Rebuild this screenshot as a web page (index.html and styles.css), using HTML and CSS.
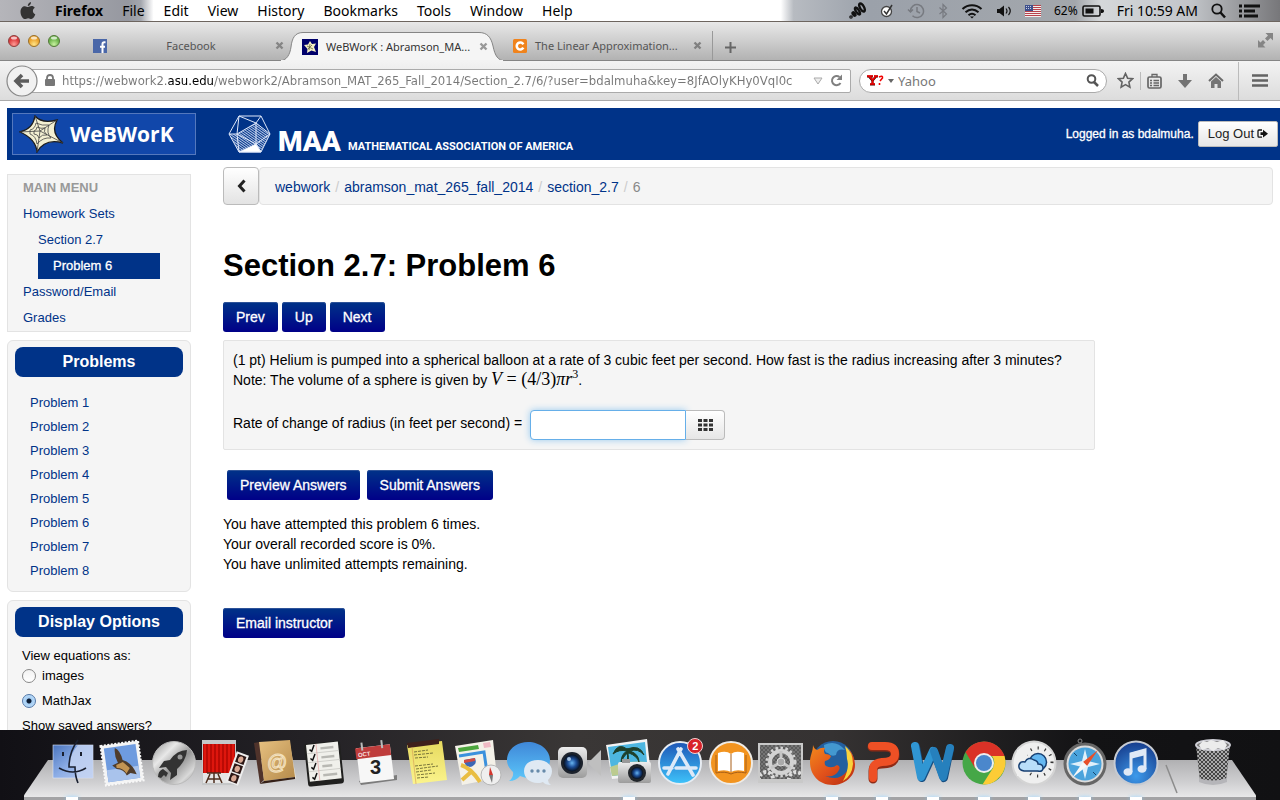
FILE: index.html
```html
<!DOCTYPE html>
<html lang="en">
	<head>
		<title>WeBWorK : Abramson_MAT_265_Fall_2014 : Section_2.7 : 6</title>
		<meta charset="utf-8">
		<meta name="viewport" content="width=device-width, initial-scale=1.0">
		<link rel="stylesheet" href="styles.css">
	</head>
	<body>
		<svg class="defs" aria-hidden="true">
			<defs>
				<linearGradient id="blue" x1="0" y1="0" x2="0" y2="1"><stop offset="0" stop-color="#1d55b5"/><stop offset="1" stop-color="#3fc4fb"/></linearGradient>
				<linearGradient id="bubble" x1="0" y1="0" x2="0" y2="1"><stop offset="0" stop-color="#3f87d8"/><stop offset="1" stop-color="#5cc8fb"/></linearGradient>
				<linearGradient id="finder" x1="0" y1="0" x2="1" y2="1"><stop offset="0" stop-color="#4a74bd"/><stop offset=".5" stop-color="#8cade6"/><stop offset="1" stop-color="#b9c9ee"/></linearGradient>
				<linearGradient id="metal" x1="0" y1="0" x2="1" y2="1"><stop offset="0" stop-color="#8d8d8d"/><stop offset=".3" stop-color="#e8e8e8"/><stop offset=".55" stop-color="#949494"/><stop offset=".8" stop-color="#d9d9d9"/><stop offset="1" stop-color="#858585"/></linearGradient>
				<linearGradient id="curtain" x1="0" y1="0" x2="4" y2="0" gradientUnits="userSpaceOnUse" spreadMethod="repeat"><stop offset="0" stop-color="#a80500"/><stop offset=".5" stop-color="#f01c12"/><stop offset="1" stop-color="#a80500"/></linearGradient>
				<linearGradient id="tan" x1="0" y1="0" x2="1" y2="1"><stop offset="0" stop-color="#e6c080"/><stop offset="1" stop-color="#b58a4a"/></linearGradient>
				<linearGradient id="silver" x1="0" y1="0" x2="0" y2="1"><stop offset="0" stop-color="#ededed"/><stop offset="1" stop-color="#9c9c9c"/></linearGradient>
				<linearGradient id="yellow" x1="0" y1="0" x2="0" y2="1"><stop offset="0" stop-color="#e6d95e"/><stop offset="1" stop-color="#fbf48d"/></linearGradient>
				<linearGradient id="fox" x1="0" y1="0" x2="1" y2="1"><stop offset="0" stop-color="#f28a1c"/><stop offset=".5" stop-color="#e2521b"/><stop offset="1" stop-color="#b52a10"/></linearGradient>
				<radialGradient id="lens"><stop offset="0" stop-color="#68b4f0"/><stop offset=".5" stop-color="#1c4d96"/><stop offset="1" stop-color="#07101f"/></radialGradient>
				<radialGradient id="itunes" cx=".5" cy=".8" r=".8"><stop offset="0" stop-color="#3d9aeb"/><stop offset="1" stop-color="#163c8c"/></radialGradient>
				<radialGradient id="redlight" cx=".5" cy=".8"><stop offset="0" stop-color="#ff9c96"/><stop offset="1" stop-color="#dc3a3c"/></radialGradient>
				<radialGradient id="amberlight" cx=".5" cy=".8"><stop offset="0" stop-color="#ffe588"/><stop offset="1" stop-color="#eca32c"/></radialGradient>
				<radialGradient id="greenlight" cx=".5" cy=".8"><stop offset="0" stop-color="#c8f2a0"/><stop offset="1" stop-color="#6cb44b"/></radialGradient>
				<pattern id="mesh" width="4" height="4" patternUnits="userSpaceOnUse"><path d="M0 0L4 4M4 0L0 4" stroke="#c4c4c4" stroke-width=".8"/></pattern>
				<pattern id="hatch" width="2" height="2" patternUnits="userSpaceOnUse" patternTransform="rotate(35)"><path d="M0 .5H2" stroke="#c9d7f2" stroke-width=".9"/></pattern>
				<clipPath id="gears"><path d="M4 7h41v34H4z"/></clipPath>
			</defs>
		</svg>

		<nav class="menubar">
			<button class="apple" aria-label="Apple"><svg width="16" height="18" viewBox="0 0 16 18"><path fill="#333" d="M11 0c.2 2-1.400 4-3.200 4C7.500 2.200 9.200.3 11 0zM8 5c1 0 2-1 3.600-1 1.300 0 2.500.7 3.200 1.700-2.800 1.700-2.300 5.500.5 6.600C14.600 14.500 13 17 11.400 17c-1.200 0-1.700-.8-3.200-.8-1.500 0-2 .8-3.200.8C2.800 17 .5 13.300.5 9.700.5 6.200 2.700 4.200 4.900 4.200 6.300 4.200 7.200 5 8 5z"/></svg></button>
			<button class="app">Firefox</button>
			<button>File</button>
			<button>Edit</button>
			<button>View</button>
			<button>History</button>
			<button>Bookmarks</button>
			<button>Tools</button>
			<button>Window</button>
			<button>Help</button>
			<div class="status">
				<svg width="18" height="18" viewBox="0 0 18 18" fill="none" stroke="#111" stroke-width="2.400"><ellipse cx="13" cy="5.500" rx="2" ry="4.500" transform="rotate(-30 13 5.500)"/><ellipse cx="8.500" cy="9" rx="1.500" ry="4" transform="rotate(-35 8.500 9)"/><ellipse cx="5" cy="12" rx="1" ry="2" transform="rotate(-35 5 12)"/><circle cx="2" cy="15" r=".6"/></svg>
				<svg width="14" height="16" viewBox="0 0 14 16"><circle cx="6.500" cy="8.500" r="5" fill="#fff" stroke="#444" stroke-width="1.300"/><path d="M4 8l2.500 3L12 2" fill="none" stroke="#333" stroke-width="1.500"/></svg>
				<svg width="18" height="16" viewBox="0 0 18 16" fill="none" stroke="#777a80" stroke-width="1.500"><path d="M3.500 8a6.500 6.500 0 1 1 2 4.800M1 6.500l2.500 2.500L6 6.500M10 4v4.500l3 1.500"/></svg>
				<svg width="10" height="16" viewBox="0 0 10 16" fill="none" stroke="#777a80" stroke-width="1.200"><path d="M1.500 4.500l7 6.500L5 14.500v-13L8.500 5l-7 6"/></svg>
				<svg width="22" height="16" viewBox="0 0 22 16" fill="none" stroke="#111" stroke-width="2"><path d="M1.500 6c5.500-5 13.500-5 19 0M4.500 9.300c4-3.600 9-3.600 13 0M7.500 12.300c2.300-2 4.700-2 7 0"/><path d="M9 13.500h4l-2 2z" fill="#111" stroke="none"/></svg>
				<svg width="16" height="14" viewBox="0 0 16 14"><path d="M1 5h2.500L8 1.500v11L3.500 9H1z" fill="#111"/><path d="M10 4.500q2 2.500 0 5M12.500 3q3.500 4 0 8" fill="none" stroke="#111" stroke-width="1.200"/></svg>
				<svg class="flag" width="16" height="12" viewBox="0 0 16 12"><path fill="#f4eeee" d="M0 0h16v12H0z"/><path stroke="#b8434c" d="M0 .5h16M0 2.500h16M0 4.500h16M0 6.500h16M0 8.500h16M0 10.500h16"/><path fill="#3d4f8c" d="M0 0h8v6H0z"/><path d="M1 1.500h6M1 3.500h6" stroke="#c5cbe0" stroke-dasharray="1 1"/></svg>
				<span class="percent">62%</span>
				<svg class="battery" width="22" height="12" viewBox="0 0 22 12"><rect x="1" y="1" width="17" height="10" rx="1.500" fill="none" stroke="#111" stroke-width="1.600"/><path fill="#111" d="M3.500 3.500h8v5h-8zM19 4q3 0 3 2t-3 2z"/></svg>
				<span class="clock">Fri 10:59 AM</span>
				<svg class="search" width="15" height="16" viewBox="0 0 15 16" fill="none" stroke="#111" stroke-width="1.800"><circle cx="6" cy="6" r="4.700"/><path d="M9.500 9.500L14 14.500" stroke-width="2.500"/></svg>
				<svg class="list" width="21" height="14" viewBox="0 0 21 14" stroke="#111" stroke-width="3"><path d="M0 2h3M5 2h16M0 7h3M5 7h11M0 12h3M5 12h14"/></svg>
			</div>
		</nav>

		<header class="browser">
			<div class="tabs">
				<div class="lights">
					<button aria-label="Close"><svg width="14" height="14"><circle cx="7" cy="7" r="5.500" fill="url(#redlight)" stroke="#8d4240"/><ellipse cx="7" cy="4" rx="3" ry="1.500" fill="#fff" opacity=".7"/></svg></button>
					<button aria-label="Minimize"><svg width="14" height="14"><circle cx="7" cy="7" r="5.500" fill="url(#amberlight)" stroke="#97702c"/><ellipse cx="7" cy="4" rx="3" ry="1.500" fill="#fff" opacity=".7"/></svg></button>
					<button aria-label="Zoom"><svg width="14" height="14"><circle cx="7" cy="7" r="5.500" fill="url(#greenlight)" stroke="#55783c"/><ellipse cx="7" cy="4" rx="3" ry="1.500" fill="#fff" opacity=".7"/></svg></button>
				</div>
				<div class="tab facebook">
					<svg width="14" height="14" viewBox="0 0 14 14"><path fill="#4a67a8" d="M0 0h14v14H0z"/><path d="M12.500 3.300h-1.300q-1.700 0-1.700 1.700v9M7 7.700h5" fill="none" stroke="#fff" stroke-width="2"/></svg>
					<span>Facebook</span>
					<button aria-label="Close tab"><svg width="9" height="9" viewBox="0 0 9 9"><path d="M1.500 1.500l6 6M7.500 1.500l-6 6" stroke="#858585" stroke-width="2.400"/></svg></button>
				</div>
				<div class="tab active">
					<svg class="shape" viewBox="0 0 226 29" preserveAspectRatio="none"><path d="M0 29C8 29 11 22 12 15C13 6 16 .5 24 .5H200C208 .5 212 5 214 14C216 24 219 28.500 226 29Z" fill="#f5f5f5" stroke="#858585"/><path d="M2 29H224" stroke="#f3f3f3" stroke-width="2"/></svg>
					<svg width="16" height="16" viewBox="0 0 16 16"><path fill="#00006b" d="M0 0h16v16H0z"/><path d="M2 6l4-.5L8 2l2 3 4-.5-2 3.500 2 5-4.500-1.500L5 14l.5-4z" fill="#f4efc4"/><path d="M5 7l6 3M8 5l-1 6M10 6l-4 4" stroke="#55542c" stroke-width=".7"/></svg>
					<span>WeBWorK : Abramson_MA...</span>
					<button aria-label="Close tab"><svg width="9" height="9" viewBox="0 0 9 9"><path d="M1.500 1.500l6 6M7.500 1.500l-6 6" stroke="#999" stroke-width="2.400"/></svg></button>
				</div>
				<div class="tab linear">
					<svg width="14" height="14" viewBox="0 0 14 14"><rect width="14" height="14" rx="1.500" fill="#f0831c"/><path d="M10.300 5.300A3.500 3.500 0 1 0 10.300 8.700" fill="none" stroke="#fff" stroke-width="2.600"/></svg>
					<span>The Linear Approximation...</span>
					<button aria-label="Close tab"><svg width="9" height="9" viewBox="0 0 9 9"><path d="M1.500 1.500l6 6M7.500 1.500l-6 6" stroke="#808080" stroke-width="2.400"/></svg></button>
				</div>
				<button class="newtab" aria-label="New tab"><svg width="11" height="11" viewBox="0 0 11 11"><path d="M5.500 0v11M0 5.500h11" stroke="#666" stroke-width="2"/></svg></button>
				<button class="fullscreen" aria-label="Full screen"><svg width="15" height="15" viewBox="0 0 15 15" fill="#858585"><path d="M7.500 0H15v7.500L12.500 5 9.500 8 7 5.500l3-3zM0 7l2.500 2.500L5 7l2.500 2.500L5 12l2.500 2.500H0z"/></svg></button>
			</div>
			<div class="toolbar">
				<button class="goback" aria-label="Back"><svg width="32" height="32" viewBox="0 0 32 32"><circle cx="16" cy="16" r="15" fill="#f1f1f1" stroke="#888" stroke-width="1.200"/><path d="M16 10l-6 6 6 6M11 16h12" fill="none" stroke="#5c5c5c" stroke-width="3.600"/></svg></button>
				<div class="address">
					<svg width="10" height="13" viewBox="0 0 10 13"><rect y="5" width="10" height="7" rx="1" fill="#777"/><path d="M2 6V4q0-3 3-3t3 3v2" fill="none" stroke="#777" stroke-width="1.800"/></svg>
					<input class="url" type="text" aria-label="Address" value="https://webwork2.asu.edu/webwork2/Abramson_MAT_265_Fall_2014/Section_2.7/6/?user=bdalmuha&amp;key=8JfAOlyKHy0VqI0c">
					<svg width="10" height="8" viewBox="0 0 10 8"><path d="M1 1h8L5 7z" fill="#eee" stroke="#aaa"/></svg>
					<button aria-label="Reload"><svg width="13" height="13" viewBox="0 0 13 13"><path d="M10.500 9A4.600 4.600 0 1 1 9.500 3" fill="none" stroke="#808080" stroke-width="2"/><path d="M12 .5V6H6.500z" fill="#808080"/></svg></button>
				</div>
				<div class="find">
					<svg width="17" height="11" viewBox="0 0 17 11"><path d="M0 1.500h6M7 1.500h4M2 1.500l3.500 4L9 1.500M5.500 5v4M3 9.500h5" stroke="#400" stroke-width="2.200" fill="none"/><path d="M0 1h6M7 1h4M2 1l3.500 4L9 1M5.500 5v4M3 9h5M12 2q4-2 3.500 1L13 6M12.500 8v2" stroke="#f00000" stroke-width="1.600" fill="none"/></svg>
					<svg width="6" height="4"><path d="M0 0h6L3 4z" fill="#666"/></svg>
					<input type="text" aria-label="Search" placeholder="Yahoo">
					<svg width="13" height="13" viewBox="0 0 13 13" fill="none" stroke="#555"><circle cx="5.500" cy="5" r="3.800" stroke-width="2"/><path d="M8 8l4 4" stroke-width="2.500"/></svg>
				</div>
				<div class="tools">
					<button aria-label="Bookmark"><svg width="17" height="17" viewBox="0 0 17 17"><path d="M8.500 1.500l2.100 4.700 5 .5-3.700 3.400 1 5-4.400-2.500-4.400 2.500 1-5L1.400 6.700l5-.5z" fill="none" stroke="#636363" stroke-width="1.600"/></svg></button>
					<i class="rule"></i>
					<button aria-label="Show bookmarks"><svg width="15" height="16" viewBox="0 0 15 16" fill="none" stroke="#666" stroke-width="1.700"><rect x="1" y="4" width="13" height="11" rx="1.500"/><path d="M5 4V1.500h5V4M3 7.500h2M6.500 7.500H12M3 10h2M6.500 10H12M3 12.500h2M6.500 12.500H12" stroke-width="1.300"/></svg></button>
					<button class="down" aria-label="Downloads"><svg width="14" height="14" viewBox="0 0 14 14"><path d="M5 0h4v6h5l-7 8-7-8h5z" fill="#737373"/></svg></button>
					<button class="home" aria-label="Home"><svg width="16" height="15" viewBox="0 0 16 15"><path d="M1 8l7-6.500L15 8" fill="none" stroke="#6a6a6a" stroke-width="2"/><path d="M3 8.500l5-4.500 5 4.500V15H9.500v-4h-3v4H3z" fill="#757575"/></svg></button>
					<i class="rule tall"></i>
					<button class="menu" aria-label="Open menu"><svg width="16" height="13" viewBox="0 0 16 13"><path d="M0 1.500h16M0 6.500h16M0 11.500h16" stroke="#636363" stroke-width="2.600"/></svg></button>
				</div>
			</div>
		</header>

		<div class="page">
			<div class="masthead">
				<a class="webwork" href="#">
					<svg width="46" height="38" viewBox="0 0 46 38"><path d="M1 17Q14 14 16 1q7 8 22 4-7 13 6 23-18-5-26 9-1-13-17-20z" fill="#f3f0d2" stroke="#1d1d1d" stroke-width="1.300"/><path d="M1 17l20-1M16 1l5 15M38 5L21 16l-3 21M21 16l23 12M11 15q5-1 6-7 6 3 13 2-3 8 2 13-8-1-14 6-1-8-7-10zM15 16q3-1 3-4 4 2 8 1-2 4 2 7-5-1-8 3-1-4-5-4z" fill="none" stroke="#444" stroke-width=".8"/></svg>
					<span>WeBWorK</span>
				</a>
				<a class="maa" href="#">
					<svg width="43" height="39" viewBox="0 0 43 39" stroke="#dfe8fa" stroke-width="1"><path d="M9 19L28 8l14 11-9 18H11L1 19z" fill="url(#hatch)" stroke="none"/><path d="M11 1h22l9 18-9 18H11L1 19zM11 1l17 7L33 1M28 8l14 11L28 29 9 19 28 8v21M11 1L9 19l2 18M1 19h8M33 37l-5-8" fill="none"/><path d="M11 37l17-8 5 8z" fill="#fff"/></svg>
					<b>MAA</b>
					<span>MATHEMATICAL ASSOCIATION OF AMERICA</span>
				</a>
				<div class="login">
					<span>Logged in as bdalmuha.</span>
					<button>Log Out <svg width="11" height="10" viewBox="0 0 11 10"><path d="M5 1H2Q1 1 1 2v5q0 1.200 1 1.200h3" fill="none" stroke="#111" stroke-width="1.300"/><path d="M3.500 3.300H6V.8l5 3.900-5 3.900V6H3.500z" fill="#111"/></svg></button>
				</div>
			</div>

			<div class="columns">
				<aside>
					<ul class="mainmenu">
						<li class="heading">Main Menu</li>
						<li><a href="#">Homework Sets</a></li>
						<li class="nested"><a href="#">Section 2.7</a></li>
						<li class="nested"><a class="current" href="#">Problem 6</a></li>
						<li><a href="#">Password/Email</a></li>
						<li><a href="#">Grades</a></li>
					</ul>
					<section class="panel">
						<h2>Problems</h2>
						<ul class="problems">
							<li><a href="#">Problem 1</a></li>
							<li><a href="#">Problem 2</a></li>
							<li><a href="#">Problem 3</a></li>
							<li><a href="#">Problem 4</a></li>
							<li><a href="#">Problem 5</a></li>
							<li><a href="#">Problem 6</a></li>
							<li><a href="#">Problem 7</a></li>
							<li><a href="#">Problem 8</a></li>
						</ul>
					</section>
					<section class="panel">
						<h2>Display Options</h2>
						<div class="options">
							<p>View equations as:</p>
							<label><input type="radio" name="display"> images</label>
							<label><input type="radio" name="display" checked> MathJax</label>
							<p>Show saved answers?</p>
						</div>
					</section>
				</aside>

				<main>
					<div class="crumbs">
						<button aria-label="Up one level"><svg width="9" height="14" viewBox="0 0 9 14"><path d="M7.500 1.500L2.500 7l5 5.500" fill="none" stroke="#222" stroke-width="3"/></svg></button>
						<ol>
							<li><a href="#">webwork</a></li>
							<li><a href="#">abramson_mat_265_fall_2014</a></li>
							<li><a href="#">section_2.7</a></li>
							<li>6</li>
						</ol>
					</div>
					<h1>Section 2.7: Problem 6</h1>
					<div class="nav">
						<a class="btn" href="#">Prev</a>
						<a class="btn" href="#">Up</a>
						<a class="btn" href="#">Next</a>
					</div>
					<div class="problem">
						<p>(1 pt) Helium is pumped into a spherical balloon at a rate of 3 cubic feet per second. How fast is the radius increasing after 3 minutes?</p>
						<p>Note: The volume of a sphere is given by <span class="math"><i>V</i> = (4/3)<i>πr</i><sup>3</sup></span>.</p>
						<div class="answer">
							<label for="answer">Rate of change of radius (in feet per second) =</label>
							<div class="entry">
								<input id="answer" type="text">
								<button aria-label="Equation editor"><svg width="15" height="12" viewBox="0 0 15 12" stroke="#333" stroke-width="3"><path d="M0 1.500h4M5.500 1.500h4M11 1.500h4M0 6h4M5.500 6h4M11 6h4M0 10.500h4M5.500 10.500h4M11 10.500h4"/></svg></button>
							</div>
						</div>
					</div>
					<div class="submit">
						<button class="btn">Preview Answers</button>
						<button class="btn">Submit Answers</button>
					</div>
					<p>You have attempted this problem 6 times.<br>
					Your overall recorded score is 0%.<br>
					You have unlimited attempts remaining.</p>
					<button class="btn email">Email instructor</button>
				</main>
			</div>
		</div>

		<footer class="dock">
			<div class="apps">
				<button class="running" aria-label="Finder"><svg viewBox="0 0 50 50"><rect x="6" y="7" width="40" height="33" fill="url(#finder)" stroke="#dfe7f7" stroke-width=".6"/><path d="M31 7h15v33H30q-2-6-2-11h-6q1-13 9-22z" fill="#c6d5f3" opacity=".8"/><path d="M31 2Q22 14 22 29h6q0 9 3 16M12 30q14 8 27 0" fill="none" stroke="#1a2030" stroke-width="1.600"/><path d="M16 14v4M34 14v4" stroke="#1a2030" stroke-width="2"/></svg></button>
				<button aria-label="Mail"><svg viewBox="0 0 50 50"><g transform="rotate(-8 25 25)"><rect x="5" y="5" width="38" height="40" fill="#f4f4f4" stroke="#f8f8f8" stroke-width="2" stroke-dasharray="2 1.500"/><rect x="8" y="8" width="32" height="34" fill="#6e9bdf"/><path d="M8 30h32v12H8z" fill="#a9c3ec"/><path d="M19 9q5 3 6 13 9 4 12 16l-6-2-4 2q-2-7-9-8l-4-4 6-2q-3-8-1-15z" fill="#4f3c2b"/><path d="M18 26l7-2 6 7-4 5q-2-6-9-7z" fill="#c29453"/></g></svg></button>
				<button aria-label="Launchpad"><svg viewBox="0 0 50 50"><circle cx="25" cy="25" r="21.500" fill="url(#metal)" stroke="#bbb"/><path d="M38 12q-10 0-17 10l-6 1-5 7 7-1 5 6-1 7 7-5v-6q9-8 10-19zM14 31q-5 2-5 8l3 1 3-3 2 2 2-4z" fill="#333"/><circle cx="31" cy="19" r="2.500" fill="#999"/></svg></button>
				<button aria-label="Photo Booth"><svg viewBox="0 0 50 50"><path d="M3 2h34v45H3z" fill="#c5c7c8"/><path d="M4 6h32v29H4z" fill="url(#curtain)"/><path d="M4 35h32v10H4z" fill="#e6e6e6"/><path d="M8 35h14M11 36L7 45M19 36l4 9M15 35v10M9 41h12" stroke="#4e2d1c" stroke-width="1.500"/><g transform="rotate(20 37 30)"><path d="M32 14h13v32H32z" fill="#eee"/><path d="M34 16h9v8.500h-9zM34 26h9v8.500h-9zM34 36h9v8.500h-9z" fill="#2c1715"/><g fill="#d9a995"><ellipse cx="38.500" cy="20.500" rx="2.600" ry="3.200"/><ellipse cx="38.500" cy="30.500" rx="2.600" ry="3.200"/><ellipse cx="38.500" cy="40.500" rx="2.600" ry="3.200"/></g></g></svg></button>
				<button aria-label="Contacts"><svg viewBox="0 0 50 50"><path d="M40 7l6 33-33 5z" fill="#e8e4da"/><path d="M4 5l5-1 5 38-4 4z" fill="#4f332b"/><path d="M9 4l31-2 5 37-31 4z" fill="url(#tan)"/><path d="M10 46l4-3 31-4v2z" fill="#342018"/><text x="17" y="31" class="at">@</text></svg></button>
				<button aria-label="Reminders"><svg viewBox="0 0 50 50"><g transform="rotate(-6 25 25)"><rect x="6" y="4" width="36" height="43" rx="3" fill="#20201f"/><rect x="8" y="5" width="32" height="37" fill="#f0f0eb"/><path d="M8 14h32M8 23h32M8 32h32" stroke="#c9c9c4" stroke-width=".8"/><path d="M18 5v37" stroke="#e39a9a" stroke-width=".6"/><path d="M11 10l2 2 3-6M11 19l2 2 3-6M11 28l2 2 3-6M11 38l2 2 3-6" fill="none" stroke="#111" stroke-width="1.500"/><path d="M22 10h13M22 19h13M22 28h10M22 37h14" stroke="#b8b8b3" stroke-width="2.400"/></g></svg></button>
				<button aria-label="Calendar"><svg viewBox="0 0 50 50"><path d="M8 43l38-6v5L10 47z" fill="#7c7c7c"/><g transform="rotate(-7 25 25)"><path d="M7 8h34v35H7z" fill="#f7f7f7"/><path d="M6 8h35v11H6z" fill="#bf3d3c"/><path d="M13 3v8M33 3v8" stroke="#bbb" stroke-width="2"/><text x="8" y="17" class="month">OCT</text></g><text x="19" y="36" class="day">3</text></svg></button>
				<button aria-label="Stickies"><svg viewBox="0 0 50 50"><path d="M5 7l35-4 5 39-34 4z" fill="url(#yellow)"/><path d="M5 5l32-4v5L6 10z" fill="#3f201b"/><path d="M12 14l14-2M12 17l19-2M13 20l13-1M13 28l18-2M14 31l22-3M14 34l15-2M15 37l18-2M15 40l12-1" stroke="#6d6a34" stroke-width=".9" stroke-dasharray="3 1"/><path d="M10 9l4 37" stroke="#d59a55" stroke-width=".6"/></svg></button>
				<button aria-label="Maps"><svg viewBox="0 0 50 50"><path d="M3 8l38-6 4 38-35 7z" fill="#f4f1e8"/><path d="M6 10l20-3 1 4-20 3z" fill="#4ca63d"/><path d="M31 5l7-1 1 5-7 1z" fill="#efb9c3"/><path d="M7 18l25-4 4 27" fill="none" stroke="#3b91dd" stroke-width="3"/><path d="M9 27q10 3 19 17M10 42l9-8" fill="none" stroke="#e9bd42" stroke-width="4"/><path d="M12 22l11-2q2 5-1 7-2 2-4 2-4-1-5-3z" fill="#3c67b5"/><path d="M12 22l11-2v3l-11 2z" fill="#cf4b43"/><circle cx="39" cy="37" r="10" fill="#efefef" stroke="#b7b7b7"/><path d="M38 29l3 8h-4z" fill="#d3352c"/><path d="M37 37h4l-1 8z" fill="#777"/></svg></button>
				<button aria-label="Messages"><svg viewBox="0 0 50 50"><path d="M25 4c12 0 22 8 22 18s-9 18-20 18c-4 0-7-1-10-2q-4 5-11 5 5-4 4-9C6 30 4 27 4 22 4 12 13 4 25 4z" fill="url(#bubble)"/><path d="M35 22c8 0 14 5 14 11 0 4-2 7-4 9q0 3 3 5-6 0-8-3c-2 1-4 1-6 1-7 0-13-5-13-12s6-11 14-11z" fill="#dfe9f3"/><g fill="#668aaa"><circle cx="29" cy="33" r="1.700"/><circle cx="35" cy="33" r="1.700"/><circle cx="41" cy="33" r="1.700"/></g></svg></button>
				<button aria-label="FaceTime"><svg viewBox="0 0 50 50"><path d="M34 25l13-13v26z" fill="#bfbfbf"/><rect x="4" y="9" width="29" height="31" rx="5" fill="url(#silver)"/><circle cx="18" cy="25" r="11" fill="#1c222c"/><circle cx="18" cy="25" r="8.500" fill="url(#lens)"/><circle cx="15" cy="21" r="2" fill="#c8e3fb" opacity=".8"/></svg></button>
				<button class="running" aria-label="iPhoto"><svg viewBox="0 0 50 50"><path d="M2 7l41-6 4 36-39 4z" fill="#f3f3f3"/><path d="M4 9l37-5 3 30-36 4z" fill="#4db6e0"/><path d="M6 29q17-7 37-5l1 10-36 4z" fill="#bccb8f"/><path d="M23 28q3-8 0-18M23 11q-9-7-14 5 6-5 14-3-6 3-6 12 3-9 8-10 8 3 10 9 0-8-9-11 8-3 14 4-4-11-17-6z" fill="#1d3f2b" stroke="#1d3f2b"/><rect x="14" y="24" width="33" height="21" rx="2" fill="url(#silver)"/><path d="M18 21h8v4h-8z" fill="#999"/><circle cx="33" cy="35" r="9" fill="#22262b"/><circle cx="33" cy="35" r="6" fill="url(#lens)"/></svg></button>
				<button aria-label="App Store"><svg viewBox="0 0 50 50"><circle cx="25" cy="25" r="21" fill="url(#blue)" stroke="#e7ecf2" stroke-width="2"/><path d="M26 11L13 36M23 11l15 26M9 30h8M21 30h12M35 30h6" stroke="#dce9f8" stroke-width="3.600" stroke-linecap="round"/></svg><b class="badge">2</b></button>
				<button aria-label="iBooks"><svg viewBox="0 0 50 50"><circle cx="25" cy="25" r="21" fill="#f29420" stroke="#efebe5" stroke-width="2"/><path d="M12 15q8-3 13 1 5-4 13-1v18q-8-2-13 1-5-3-13-1z" fill="#fff"/><path d="M10 17v18q9-2 15 1 6-3 15-1V17M25 16v18" fill="none" stroke="#a95f16" stroke-width="1"/></svg></button>
				<button aria-label="System Preferences"><svg viewBox="0 0 50 50"><rect x="2" y="5" width="45" height="40" fill="#c9c9c9"/><path d="M4 7h41v34H4z" fill="#5c5c5c"/><path d="M4 7h41v34H4z" fill="url(#mesh)" opacity=".3"/><g clip-path="url(#gears)"><circle cx="25" cy="24" r="11" fill="none" stroke="#d3d3d3" stroke-width="4"/><circle cx="25" cy="24" r="14" fill="none" stroke="#d3d3d3" stroke-width="3" stroke-dasharray="2.500 2.500"/><path d="M25 24V13M25 24l10 6M25 24l-10 6" stroke="#c6c6c6" stroke-width="3"/><circle cx="25" cy="24" r="4" fill="#aaa" stroke="#ddd"/><circle cx="10" cy="41" r="7" fill="none" stroke="#ddd" stroke-width="4" stroke-dasharray="3 2"/><circle cx="40" cy="41" r="7" fill="none" stroke="#ddd" stroke-width="4" stroke-dasharray="3 2"/></g></svg></button>
				<button class="running" aria-label="Firefox"><svg viewBox="0 0 50 50"><circle cx="26" cy="24" r="21" fill="#235f9f"/><path d="M17 7q12-6 21 5-8-2-9 5-5 2-8-2-4 0-4-8z" fill="#4398d0"/><path d="M6 7q1 4 4 5 4-3 8-2-2 3 0 6 4 0 6 2-1 4-6 5-1 3 1 5 6 3 11-1 4 1 2 5-4 8-14 6 14 6 22-5 6-9 2-22 6 8 6 16c0 12-11 20-22 20C11 47 3 36 3 24 3 17 6 14 6 7z" fill="url(#fox)"/><path d="M38 8q8 6 8 18-1 12-10 17 7-13 4-22 0-7-2-13z" fill="#f9d23c"/></svg></button>
				<button class="running" aria-label="PowerPoint"><svg viewBox="0 0 50 50" fill="none" stroke-linecap="round" stroke-linejoin="round"><path d="M15 9h13q10 0 10 8 0 9-13 9-9 0-9 7v8" stroke="#8f2a15" stroke-width="9"/><path d="M15 8h13q10 0 10 8 0 8-13 8-9 1-9 8v8" stroke="#ee5025" stroke-width="8"/></svg></button>
				<button class="running" aria-label="Word"><svg viewBox="0 0 50 50" fill="none" stroke-linecap="round" stroke-linejoin="round" stroke-width="8"><path d="M8 9l6 31 12-26 10 26 6-29" stroke="#164f83"/><path d="M7 8l6 31 12-26" stroke="#3096d3"/><path d="M26 13l9 26 7-29" stroke="#2680bd"/></svg></button>
				<button class="running" aria-label="Chrome"><svg viewBox="0 0 50 50"><circle cx="25" cy="25" r="21.500" fill="#45a747"/><path d="M25 3.500A21.500 21.500 0 0 1 45.500 18H25L16 30 6.500 14Q13 3.500 25 3.500z" fill="#da3227"/><path d="M45.500 18q4 14-8 24-6 5-14 4.500L34 30q3-7-1-12z" fill="#fccc36"/><circle cx="25" cy="25" r="10" fill="#eee"/><circle cx="25" cy="25" r="8" fill="#4b87cc"/></svg></button>
				<button class="running" aria-label="Weather"><svg viewBox="0 0 50 50"><circle cx="25" cy="25" r="21.500" fill="#efefef" stroke="#d4d4d4" stroke-width="2"/><circle cx="29" cy="24" r="14" fill="none" stroke="#333" stroke-width="3" stroke-dasharray="1.200 6.100" stroke-dashoffset="-51" pathLength="88"/><path d="M8 12h10v26H8z" fill="#efefef"/><circle cx="29" cy="24" r="8.500" fill="#65b8f2" stroke="#173f72" stroke-width="1.500"/><path d="M15 33q-6-1-5-6 1-4 6-3 3-6 9-2 4 1 4 4 5 0 5 4t-5 3z" fill="#b9def9" stroke="#173f72" stroke-width="1.500"/></svg></button>
				<button class="running" aria-label="Safari"><svg viewBox="0 0 50 50"><circle cx="20" cy="3" r="2" fill="none" stroke="#888"/><circle cx="25" cy="26" r="20" fill="#dcdcdc" stroke="#666" stroke-width="3"/><circle cx="25" cy="26" r="16.500" fill="#4aa3dc"/><path d="M25 11l3 12 12 3-12 3-3 12-3-12-12-3 12-3z" fill="#dff0fb"/><path d="M38 12L27 28l-4-4z" fill="#e8502a"/><path d="M12 40l11-16 4 4z" fill="#f7f7f7"/><path d="M14 15l3 3M36 37l-3-3" stroke="#16476d"/></svg></button>
				<button class="running" aria-label="iTunes"><svg viewBox="0 0 50 50"><circle cx="25" cy="25" r="21.500" fill="url(#itunes)" stroke="#c7cbd2" stroke-width="2"/><path d="M20 34V16l14-4v19" fill="none" stroke="#dfe9f6" stroke-width="3"/><path d="M19 15l16-4v6l-16 4z" fill="#dfe9f6"/><ellipse cx="17" cy="34" rx="4.500" ry="3.800" fill="#dfe9f6"/><ellipse cx="31" cy="31" rx="4.500" ry="3.800" fill="#dfe9f6"/></svg></button>
			</div>
			<svg class="divider" width="14" height="30" viewBox="0 0 14 30"><path d="M1 1l11 28" stroke="#8c8c8c" stroke-width="1.500"/></svg>
			<button class="trash" aria-label="Trash"><svg viewBox="0 0 50 50"><path d="M8 7h34l-4 36q-13 6-26 0z" fill="#454545"/><path d="M8 7h34l-4 36q-13 6-26 0z" fill="url(#mesh)"/><ellipse cx="25" cy="7" rx="17" ry="5" fill="#777" stroke="#cfcfd6" stroke-width="2"/><path d="M11 7l4-4 4 1 4-2 6 2 6-2 4 5-3 5-6-2-5 3-5-3-6 2z" fill="#ececec"/><path d="M11 40q14 5 28 0v4q-14 6-28 0z" fill="#b5b5b9"/></svg></button>
		</footer>
	</body>
</html>
```
FILE: styles.css
```css
* {
	box-sizing: border-box;
}

body {
	margin: 0;
	height: 100vh;
	display: flex;
	flex-direction: column;
	overflow: hidden;
	background: #fff;
	color: #000;
	font: 14px/20px "Liberation Sans", Helvetica, Arial, sans-serif;
}

button,
input {
	font: inherit;
	color: inherit;
}

button {
	margin: 0;
	padding: 0;
	border: 0;
	background: none;
}

svg {
	display: block;
	flex: none;
}

a {
	color: #003388;
	text-decoration: none;
}

p,
ul,
ol,
h1,
h2 {
	margin: 0;
	padding: 0;
}

ul,
ol {
	list-style: none;
}

.defs {
	position: absolute;
	width: 0;
	height: 0;
}

/* system menu bar */

.menubar {
	flex: none;
	display: flex;
	align-items: center;
	gap: 19px;
	height: 22px;
	padding: 0 20px;
	border-bottom: 1px solid #6d655f;
	background: linear-gradient(90deg, #b5b5ba, #9698a0 10%, #a4a7ae 11%, #fff 12%, #fff 61%, #b7bbc1 62%, #9ba1aa 68%, #a3a7ac 84%, #d5d8da 86%, #c2c5c9 93%, #77777a);
	font: 14px/20px "Noto Sans", "Open Sans", sans-serif;
}

.menubar .app {
	font-weight: bold;
}

.status {
	display: flex;
	align-items: center;
	gap: 13px;
	margin-left: auto;
}

.status .percent {
	font-size: 12px;
}

.status .battery {
	margin-left: -9px;
}

/* browser window */

.browser {
	flex: none;
	border-bottom: 1px solid #aaa;
	background: #e4e4e4;
	font: 12px/16px "Noto Sans", "Open Sans", sans-serif;
}

.tabs {
	display: flex;
	align-items: flex-end;
	height: 39px;
	background: linear-gradient(#e8e8e8, #d3d3d3 40%, #b2b2b2);
	border-bottom: 1px solid #858585;
}

.lights {
	display: flex;
	gap: 6px;
	width: 87px;
	padding: 0 0 12px 7px;
}

.tab {
	display: flex;
	align-items: center;
	height: 29px;
	gap: 8px;
	color: #555;
	font-size: 11px;
}

.tab span {
	flex: 1;
	white-space: nowrap;
}

.facebook {
	width: 197px;
	padding: 0 0 0 6px;
	text-align: center;
}

.active {
	position: relative;
	z-index: 1;
	width: 226px;
	margin: 0 -1px -1px -5px;
	padding: 0 17px 0 23px;
	color: #333;
}

.active .shape {
	position: absolute;
	left: 0;
	top: 0;
	width: 100%;
	height: 100%;
}

.active > :not(.shape) {
	position: relative;
}

.linear {
	width: 209px;
	padding: 0 10px 0 9px;
	border-right: 1px solid #999;
}

.newtab {
	padding: 0 12px 7px;
}

.fullscreen {
	margin-left: auto;
	padding: 0 7px 12px;
}

.toolbar {
	display: flex;
	align-items: center;
	height: 39px;
	padding: 0 12px 0 6px;
	background: linear-gradient(#f3f3f3, #dcdcdc);
	font-size: 13px;
}

.goback {
	position: relative;
	z-index: 1;
}

.address,
.find {
	display: flex;
	align-items: center;
	height: 24px;
	border: 1px solid #aaa;
	background: #fff;
}

.address {
	flex: 1;
	gap: 7px;
	margin-left: -8px;
	padding: 0 7px 0 14px;
	border-radius: 2px;
}

.address input,
.find input {
	flex: 1;
	min-width: 0;
	padding: 0;
	border: 0;
	outline: 0;
	background: none;
}

/* the domain is darker than the rest of the address */
.address .url {
	background: linear-gradient(90deg, #777 106px, #000 106px, #000 152px, #777 152px);
	-webkit-background-clip: text;
	background-clip: text;
	color: transparent;
	font-family: "DejaVu Sans Condensed", "Open Sans", sans-serif;
}

.find {
	flex: none;
	width: 248px;
	gap: 4px;
	margin-left: 8px;
	padding: 0 7px;
	border-radius: 12px;
}

.find input::placeholder {
	color: #777;
	opacity: 1;
}

.tools {
	display: flex;
	align-items: center;
	gap: 6px;
	margin-left: 10px;
}

.tools .rule {
	width: 1px;
	height: 18px;
	background: #bbb;
}

.tools .tall {
	height: 38px;
	margin-left: 8px;
}

.tools .down,
.tools .home {
	margin-left: 10px;
}

.tools .menu {
	margin-left: 7px;
}

/* course page */

.page {
	flex: 1;
	min-height: 0;
	overflow: hidden;
	padding: 7px 0 0 7px;
}

.masthead {
	display: flex;
	align-items: center;
	height: 52px;
	padding: 0 2px 0 5px;
	background: #003388;
	color: #fff;
}

.masthead a {
	color: #fff;
}

.webwork {
	display: flex;
	align-items: center;
	gap: 5px;
	width: 184px;
	height: 42px;
	padding-left: 6px;
	border: 1px solid #5478bd;
	background: #1147aa;
	font: bold 21px/38px "Open Sans", "Noto Sans", sans-serif;
}

.maa {
	display: flex;
	align-items: flex-end;
	gap: 7px;
	margin-left: 32px;
	font: bold 11px/14px Roboto, "Liberation Sans", sans-serif;
}

.maa b {
	font-size: 28px;
	line-height: 24px;
}

.login {
	display: flex;
	align-items: center;
	gap: 4px;
	margin-left: auto;
	font-size: 12px;
}

.login span {
	-webkit-text-stroke: 0.3px #fff;
}

.login button {
	display: flex;
	align-items: center;
	gap: 3px;
	height: 26px;
	padding: 0 9px;
	border: 1px solid #bbb;
	border-radius: 2px;
	background: linear-gradient(#fff, #e6e6e6);
	color: #222;
	font-size: 13px;
}

.columns {
	display: flex;
	gap: 32px;
	padding: 7px 7px 0 0;
}

aside {
	flex: none;
	display: flex;
	flex-direction: column;
	gap: 8px;
	width: 184px;
	padding-top: 7px;
	font-size: 13px;
}

.mainmenu {
	border: 1px solid #e3e3e3;
	background: #f5f5f5;
	line-height: 26px;
}

.mainmenu li {
	padding: 0 15px;
}

.mainmenu .nested {
	padding: 0 30px;
}

.mainmenu .heading {
	color: #999;
	font-weight: bold;
	text-transform: uppercase;
}

.mainmenu .current {
	display: block;
	padding: 0 15px;
	background: #003388;
	color: #fff;
	-webkit-text-stroke: 0.3px #fff;
}

.panel {
	padding: 6px 7px;
	border: 1px solid #e3e3e3;
	border-radius: 6px;
	background: #f5f5f5;
}

.panel h2 {
	border-radius: 8px;
	background: #003388;
	color: #fff;
	font-size: 16px;
	line-height: 30px;
	text-align: center;
}

.problems {
	padding: 14px 15px 2px;
	line-height: 24px;
}

.options {
	padding: 9px 7px 0;
}

.options label {
	display: flex;
	align-items: center;
	gap: 6px;
	height: 20px;
	margin-bottom: 5px;
}

.options input {
	appearance: none;
	width: 14px;
	height: 14px;
	margin: 0;
	border: 1px solid #888;
	border-radius: 50%;
	background: linear-gradient(#f2f2f2, #fff);
}

.options input:checked {
	border-color: #5277a8;
	background: radial-gradient(circle, #0c1c33 2px, #a5cdf3 3px, #c9e6fc);
}

main {
	flex: 1;
	min-width: 0;
}

.crumbs {
	display: flex;
	height: 38px;
}

.crumbs button {
	display: flex;
	align-items: center;
	justify-content: center;
	width: 36px;
	border: 1px solid #bbb;
	border-radius: 4px;
	background: linear-gradient(#fff, #e3e3e3);
}

.crumbs ol {
	flex: 1;
	display: flex;
	align-items: center;
	padding: 2px 15px 0;
	border: 1px solid #e3e3e3;
	border-radius: 4px;
	background: #f5f5f5;
}

.crumbs li {
	color: #888;
}

.crumbs li + li::before {
	content: "/";
	padding: 0 5px;
	color: #ccc;
}

h1 {
	margin: 41px 0 16px;
	font-size: 31px;
	line-height: 40px;
}

.nav,
.submit {
	display: flex;
	gap: 4px;
}

.submit {
	gap: 7px;
	margin: 20px 4px 14px;
}

.btn {
	height: 30px;
	padding: 0 13px;
	border-radius: 3px;
	background: linear-gradient(#003388, #000088);
	box-shadow: inset 0 1px 0 #2d5298;
	color: #fff;
	line-height: 30px;
	-webkit-text-stroke: 0.3px #fff;
}

.problem {
	width: 83%;
	margin-top: 8px;
	padding: 9px;
	border: 1px solid #e3e3e3;
	border-radius: 2px;
	background: #f5f5f5;
}

.math {
	font: 18px/1 "Liberation Serif", serif;
}

.math sup {
	font-size: 12px;
	line-height: 0;
}

.answer {
	display: flex;
	gap: 8px;
	margin-top: 20px;
}

.answer label {
	line-height: 26px;
}

.entry {
	display: flex;
	height: 30px;
}

.entry input {
	width: 156px;
	padding: 0 6px;
	border: 1px solid #66afe9;
	border-radius: 4px 0 0 4px;
	outline: 0;
	background: #fff;
	box-shadow: 0 0 7px #99cbf0;
}

.entry button {
	display: flex;
	align-items: center;
	justify-content: center;
	width: 39px;
	border: 1px solid #bbb;
	border-left: 0;
	border-radius: 0 4px 4px 0;
	background: linear-gradient(#fff, #e6e6e6);
}

.email {
	margin-top: 34px;
}

/* dock */

.dock {
	flex: none;
	position: relative;
	z-index: 0;
	display: flex;
	height: 70px;
	padding: 8px 42px 0 47px;
	background: linear-gradient(90deg, #111015, #242226 25%, #3a3736 45%, #353232 65%, #131315 85%, #111113);
}

/* glass shelf, then its front edge */
.dock::before,
.dock::after {
	content: "";
	position: absolute;
	z-index: -1;
	left: 24px;
	right: 24px;
	bottom: 3px;
	height: 37px;
	background: linear-gradient(#b0b0b2, #cfcfd1 60%, #e8e8e9);
	clip-path: polygon(24px 0, calc(100% - 24px) 0, 100% 95%, 100% 100%, 0 100%, 0 95%);
}

.dock::after {
	bottom: 0;
	height: 3px;
	background: #a3a3a5;
	clip-path: none;
}

.apps {
	flex: 1;
	display: grid;
	grid-template-columns: repeat(22, 1fr);
}

.dock button {
	position: relative;
	display: flex;
	justify-content: center;
}

.dock button svg {
	width: 50px;
	height: 50px;
}

.dock .running::after {
	content: "";
	position: absolute;
	left: 50%;
	bottom: 0;
	width: 12px;
	height: 3px;
	margin-left: -6px;
	background: #fff;
	box-shadow: 0 0 4px #8ed0ff;
}

.badge {
	position: absolute;
	right: 2px;
	top: 0;
	width: 16px;
	height: 16px;
	border: 1px solid #f3d3d3;
	border-radius: 50%;
	background: #d8222a;
	color: #fff;
	font-size: 11px;
	line-height: 14px;
}

.divider {
	margin: 26px 9px 0 4px;
}

.at {
	fill: #c4955a;
	stroke: #f4e3c0;
	stroke-width: 1;
	font: 20px "Liberation Sans", sans-serif;
}

.month {
	fill: #f5dede;
	font: bold 6px "Liberation Sans", sans-serif;
}

.day {
	fill: #222;
	font: bold 20px "Liberation Sans", sans-serif;
}
```
